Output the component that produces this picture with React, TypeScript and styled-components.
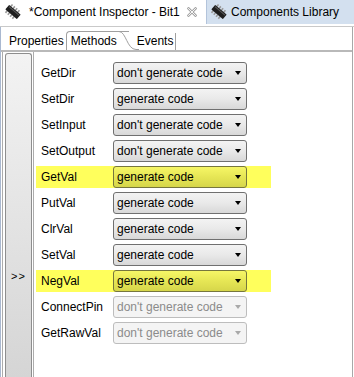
import React from 'react';
import styled, { createGlobalStyle } from 'styled-components';

const GlobalStyle = createGlobalStyle`
    html, body {
        margin: 0;
        padding: 0;
        background: #fff;
    }
    body {
        font-family: "Liberation Sans", Arial, sans-serif;
        font-size: 12px;
        color: #000;
    }
`;

const Frame = styled.div`
    width: 354px;
    height: 377px;
    display: flex;
    flex-direction: column;
    overflow: hidden;
    background: #fff;
`;

const Header = styled.div`
    display: flex;
    height: 27px;
    box-sizing: border-box;
    border-bottom: 1px solid #c9c9c9;
`;

const EditorTab = styled.div`
    width: 206px;
    display: flex;
    align-items: center;
    padding: 0 9px 2px 4px;
    box-sizing: border-box;
    gap: 7px;
    white-space: nowrap;
`;

const CloseBox = styled.span`
    margin-left: auto;
    display: flex;
`;

const LibraryTab = styled.div`
    flex: 1;
    height: 24px;
    display: flex;
    align-items: center;
    gap: 3px;
    padding-left: 3px;
    background: #d3e0ef;
    border-left: 1px solid #b3c4db;
    white-space: nowrap;
`;

const Body = styled.div`
    flex: 1;
    display: flex;
    flex-direction: column;
    border-left: 1px solid #a9b8d0;
    border-right: 1px solid #a8a8a8;
    margin-right: 1px;
    min-height: 0;
`;

const SubTabBar = styled.div`
    height: 25px;
    box-sizing: border-box;
    display: flex;
    align-items: flex-end;
    border-bottom: 2px solid #b9b9b9;
`;

const SubTab = styled.div<{ active?: boolean; last?: boolean }>`
    height: ${(p) => (p.active ? '19px' : '17px')};
    display: flex;
    align-items: center;
    padding: ${(p) => (p.active ? '0 0 0 4px' : '0 2px 1px 8px')};
    box-sizing: border-box;
    border-left: ${(p) => (p.active ? '1px solid #a0a0a0' : 'none')};
    border-top: ${(p) => (p.active ? '1px solid #a0a0a0' : 'none')};
    border-right: ${(p) => (p.last ? '1px solid #a0a0a0' : 'none')};
    border-top-left-radius: ${(p) => (p.active ? '4px' : '0')};
    white-space: nowrap;
`;

const TabCurve = styled.svg`
    align-self: flex-start;
    margin-top: -1px;
    margin-right: -10px;
`;

const Content = styled.div`
    flex: 1;
    display: flex;
    min-height: 0;
`;

const GutterWrap = styled.div`
    margin-left: 1px;
    border-left: 1px solid #acacac;
    border-right: 1px solid #acacac;
    padding: 1px 1px 0 2px;
    display: flex;
`;

const Gutter = styled.div`
    width: 25px;
    border: 1px solid #8e8e8e;
    border-bottom: none;
    border-radius: 3px 3px 0 0;
    background: linear-gradient(to bottom, #f3f3f3, #d5d5d5);
    padding-top: 215px;
    text-align: center;
    font-size: 11px;
    line-height: 14px;
    letter-spacing: 1px;
`;

const List = styled.div`
    display: flex;
    flex-direction: column;
    gap: 4px;
    padding: 10px 0 0 2px;
`;

const Row = styled.div<{ highlight?: boolean }>`
    width: 235px;
    height: 22px;
    display: flex;
    align-items: center;
    padding-left: 5px;
    box-sizing: border-box;
    background: ${(p) => (p.highlight ? '#ffff5c' : 'transparent')};
`;

const Label = styled.div`
    width: 72px;
    white-space: nowrap;
`;

const Select = styled.div<{ highlight?: boolean; disabled?: boolean }>`
    width: 134px;
    height: 22px;
    box-sizing: border-box;
    display: flex;
    align-items: center;
    justify-content: space-between;
    padding: 0 5px 0 3px;
    border-radius: 3px;
    border: 1px solid
        ${(p) => (p.disabled ? '#bdbdbd' : p.highlight ? '#76763e' : '#707070')};
    background: ${(p) =>
        p.disabled
            ? '#f4f4f4'
            : p.highlight
            ? 'linear-gradient(to bottom, #f6f666, #e6e655 50%, #d6d64a)'
            : 'linear-gradient(to bottom, #f3f3f3, #e9e9e9 50%, #d8d8d8)'};
    color: ${(p) => (p.disabled ? '#8b8b8b' : '#000')};
    white-space: nowrap;
`;

const Arrow = styled.span<{ disabled?: boolean }>`
    width: 0;
    height: 0;
    border-left: 3.5px solid transparent;
    border-right: 3.5px solid transparent;
    border-top: 4px solid ${(p) => (p.disabled ? '#a9a9a9' : '#000')};
`;

const ChipIcon = () => (
    <svg width="18" height="18" viewBox="0 0 18 18">
        <g transform="rotate(40 9 9)">
            {[3, 6, 9, 12].map((x) => (
                <React.Fragment key={x}>
                    <rect x={x} y="3.5" width="1.6" height="3" fill="#9a9a9a" />
                    <rect x={x} y="11.5" width="1.6" height="3" fill="#9a9a9a" />
                </React.Fragment>
            ))}
            <rect x="1.5" y="6" width="15" height="6" rx="0.5" fill="#1e1e1e" />
            <rect x="2.5" y="7" width="13" height="1" fill="#5a5a5a" />
        </g>
    </svg>
);

const CloseIcon = () => (
    <svg width="10" height="10" viewBox="0 0 10 10">
        <path d="M1.5 1.5 L8.5 8.5 M8.5 1.5 L1.5 8.5" stroke="#a6a6a6" strokeWidth="2.6" strokeLinecap="square" />
        <path d="M1.5 1.5 L8.5 8.5 M8.5 1.5 L1.5 8.5" stroke="#fff" strokeWidth="0.9" strokeLinecap="square" />
    </svg>
);

type Method = {
    name: string;
    value: string;
    highlight?: boolean;
    disabled?: boolean;
};

const methods: Method[] = [
    { name: 'GetDir', value: "don't generate code" },
    { name: 'SetDir', value: 'generate code' },
    { name: 'SetInput', value: "don't generate code" },
    { name: 'SetOutput', value: "don't generate code" },
    { name: 'GetVal', value: 'generate code', highlight: true },
    { name: 'PutVal', value: 'generate code' },
    { name: 'ClrVal', value: 'generate code' },
    { name: 'SetVal', value: 'generate code' },
    { name: 'NegVal', value: 'generate code', highlight: true },
    { name: 'ConnectPin', value: "don't generate code", disabled: true },
    { name: 'GetRawVal', value: "don't generate code", disabled: true },
];

const App: React.FC = () => {
    return (
        <>
            <GlobalStyle />
            <Frame>
                <Header>
                    <EditorTab>
                        <ChipIcon />
                        <span>*Component Inspector - Bit1</span>
                        <CloseBox>
                            <CloseIcon />
                        </CloseBox>
                    </EditorTab>
                    <LibraryTab>
                        <ChipIcon />
                        <span>Components Library</span>
                    </LibraryTab>
                </Header>
                <Body>
                    <SubTabBar>
                        <SubTab>Properties</SubTab>
                        <SubTab active>
                            Methods
                            <TabCurve width="22" height="19" viewBox="0 0 22 19">
                                <path
                                    d="M0 0.5 H2 C9 0.5 10 18.5 19 18.5 H22"
                                    fill="none"
                                    stroke="#a0a0a0"
                                />
                            </TabCurve>
                        </SubTab>
                        <SubTab last>Events</SubTab>
                    </SubTabBar>
                    <Content>
                        <GutterWrap>
                            <Gutter>&gt;&gt;</Gutter>
                        </GutterWrap>
                        <List>
                            {methods.map((m) => (
                                <Row key={m.name} highlight={m.highlight}>
                                    <Label>{m.name}</Label>
                                    <Select highlight={m.highlight} disabled={m.disabled}>
                                        <span>{m.value}</span>
                                        <Arrow disabled={m.disabled} />
                                    </Select>
                                </Row>
                            ))}
                        </List>
                    </Content>
                </Body>
            </Frame>
        </>
    );
};

export default App;
